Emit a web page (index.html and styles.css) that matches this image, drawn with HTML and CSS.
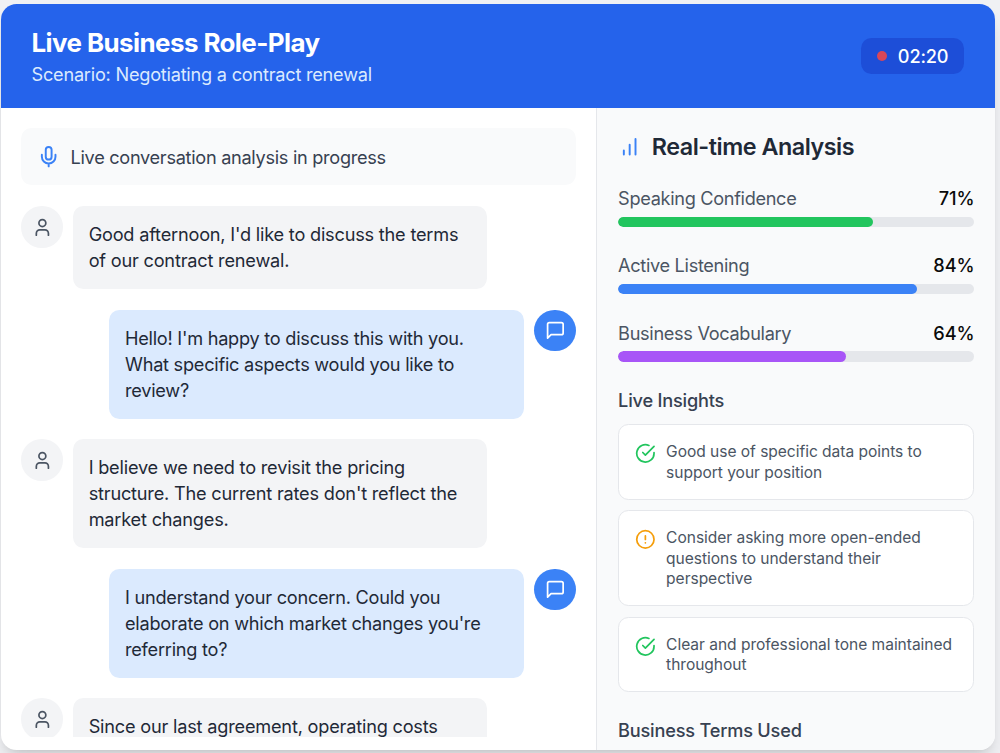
FILE: index.html
```html
<!DOCTYPE html>
<html lang="en">
<head>
<meta charset="utf-8">
<title>Live Business Role-Play</title>
<link rel="stylesheet" href="styles.css">
</head>
<body>
<svg class="defs" width="0" height="0">
  <symbol id="user" viewBox="0 0 24 24"><path d="M19 21v-2a4 4 0 0 0-4-4H9a4 4 0 0 0-4 4v2"/><circle cx="12" cy="7" r="4"/></symbol>
  <symbol id="message" viewBox="0 0 24 24"><path d="M21 15a2 2 0 0 1-2 2H7l-4 4V5a2 2 0 0 1 2-2h14a2 2 0 0 1 2 2z"/></symbol>
  <symbol id="check" viewBox="0 0 24 24"><path d="M22 11.08V12a10 10 0 1 1-5.93-9.14"/><path d="m9 11 3 3L22 4"/></symbol>
  <symbol id="alert" viewBox="0 0 24 24"><circle cx="12" cy="12" r="10"/><path d="M12 8v4M12 16h.01"/></symbol>
  <symbol id="mic" viewBox="0 0 24 24"><path d="M12 2a3 3 0 0 0-3 3v7a3 3 0 0 0 6 0V5a3 3 0 0 0-3-3Z"/><path d="M19 10v2a7 7 0 0 1-14 0v-2M12 19v3"/></symbol>
  <symbol id="bars" viewBox="0 0 24 24"><path d="M12 20V10M18 20V4M6 20v-4"/></symbol>
</svg>
<main class="card">
  <header class="header">
    <div>
      <h1 class="title">Live Business Role-Play</h1>
      <p class="scenario">Scenario: Negotiating a contract renewal</p>
    </div>
    <div class="timer"><span class="dot"></span><span class="time">02:20</span></div>
  </header>
  <div class="body">
    <section class="chat">
      <div class="banner"><svg class="icon icon-lg blue"><use href="#mic"/></svg><span class="banner-text">Live conversation analysis in progress</span></div>
      <div class="messages">
        <div class="message">
          <div class="avatar"><svg class="icon"><use href="#user"/></svg></div>
          <p class="bubble">Good afternoon, I'd like to discuss the terms<br>of our contract renewal.</p>
        </div>
        <div class="message reply">
          <p class="bubble">Hello! I'm happy to discuss this with you.<br>What specific aspects would you like to<br>review?</p>
          <div class="avatar"><svg class="icon"><use href="#message"/></svg></div>
        </div>
        <div class="message">
          <div class="avatar"><svg class="icon"><use href="#user"/></svg></div>
          <p class="bubble">I believe we need to revisit the pricing<br>structure. The current rates don't reflect the<br>market changes.</p>
        </div>
        <div class="message reply">
          <p class="bubble">I understand your concern. Could you<br>elaborate on which market changes you're<br>referring to?</p>
          <div class="avatar"><svg class="icon"><use href="#message"/></svg></div>
        </div>
        <div class="message">
          <div class="avatar"><svg class="icon"><use href="#user"/></svg></div>
          <p class="bubble">Since our last agreement, operating costs</p>
        </div>
      </div>
    </section>
    <aside class="analysis">
      <h2 class="heading"><svg class="icon icon-lg blue"><use href="#bars"/></svg><span class="heading-text">Real-time Analysis</span></h2>
      <div class="metrics">
        <div class="metric">
          <div class="row"><span>Speaking Confidence</span><b class="value">71%</b></div>
          <div class="track"><div class="fill green" style="width:71.5%"></div></div>
        </div>
        <div class="metric">
          <div class="row"><span>Active Listening</span><b class="value">84%</b></div>
          <div class="track"><div class="fill azure" style="width:84%"></div></div>
        </div>
        <div class="metric">
          <div class="row"><span>Business Vocabulary</span><b class="value">64%</b></div>
          <div class="track"><div class="fill purple" style="width:64%"></div></div>
        </div>
      </div>
      <h3 class="subheading">Live Insights</h3>
      <div class="insights">
        <div class="insight"><svg class="icon ok"><use href="#check"/></svg><p>Good use of specific data points to<br>support your position</p></div>
        <div class="insight"><svg class="icon warn"><use href="#alert"/></svg><p>Consider asking more open-ended<br>questions to understand their<br>perspective</p></div>
        <div class="insight"><svg class="icon ok"><use href="#check"/></svg><p>Clear and professional tone maintained<br>throughout</p></div>
      </div>
      <h3 class="subheading">Business Terms Used</h3>
    </aside>
  </div>
</main>
</body>
</html>
```
FILE: styles.css
```css
* { box-sizing: border-box; margin: 0; padding: 0; }
body {
  height: 753px;
  overflow: hidden;
  padding: 3.8px 0 0 0.9px;
  background: #f0f1f4;
  font-family: Inter, "Liberation Sans", sans-serif;
  font-size: 18.16px;
  line-height: 25.94px;
  letter-spacing: -0.2px;
}
.defs { display: block; position: absolute; }
.card {
  display: flex;
  flex-direction: column;
  width: 994.1px;
  height: 746.4px;
  overflow: hidden;
  border-radius: 15.6px;
  background: #fff;
  box-shadow: 0 13px 19px -4px rgba(0, 0, 0, 0.12), 0 5px 8px -5px rgba(0, 0, 0, 0.12);
}
.header {
  display: flex;
  justify-content: space-between;
  align-items: center;
  flex: none;
  height: 103.8px;
  padding: 0 31px 0 30.6px;
  background: #2563eb;
  color: #fff;
}
.title { padding-top: 1.8px; font-size: 25.94px; line-height: 36.3px; font-weight: 700; letter-spacing: -0.58px; }
.scenario { color: #dbeafe; letter-spacing: -0.23px; }
.timer {
  display: flex;
  align-items: center;
  gap: 10.4px;
  height: 36.3px;
  padding: 0 15.6px;
  border-radius: 10.4px;
  background: #1d4ed8;
}
.dot { width: 10.4px; height: 10.4px; border-radius: 50%; background: #d94758; }
.time { padding-top: 1.8px; font-weight: 500; letter-spacing: -0.15px; }
.body { display: flex; flex: 1; min-height: 0; }
.chat {
  display: flex;
  flex-direction: column;
  gap: 20.75px;
  width: 595.6px;
  padding: 20.75px 20.75px 13px 20.3px;
}
.banner {
  display: flex;
  align-items: center;
  flex: none;
  gap: 10.4px;
  height: 57.1px;
  padding: 0 15.6px;
  border-radius: 10.4px;
  background: #f9fafb;
  color: #374151;
}
.banner-text { padding-top: 2px; letter-spacing: -0.3px; }
.icon {
  flex: none;
  width: 20.75px;
  height: 20.75px;
  fill: none;
  stroke: currentColor;
  stroke-width: 2;
  stroke-linecap: round;
  stroke-linejoin: round;
}
.icon-lg { width: 23.35px; height: 23.35px; }
.blue { color: #3b82f6; }
.messages { display: flex; flex-direction: column; gap: 20.75px; min-height: 0; overflow: hidden; }
.message { display: flex; flex: none; gap: 10.4px; align-items: flex-start; }
.reply { justify-content: flex-end; }
.avatar {
  display: flex;
  align-items: center;
  justify-content: center;
  flex: none;
  width: 41.5px;
  height: 41.5px;
  border-radius: 50%;
  background: #f3f4f6;
  color: #4b5563;
}
.bubble {
  width: 414.4px;
  padding: 15.9px 15.56px 15.1px;
  border-radius: 10.4px;
  background: #f3f4f6;
  color: #1f2937;
  white-space: nowrap;
}
.reply .avatar { background: #3b82f6; color: #fff; }
.reply .bubble { background: #dbeafe; letter-spacing: -0.25px; }
.analysis {
  flex: 1;
  overflow: hidden;
  padding: 20.75px 20.6px 0;
  border-left: 1.3px solid #e5e7eb;
  background: #f9fafb;
}
.heading {
  display: flex;
  align-items: center;
  gap: 10.4px;
  height: 36.3px;
  margin-bottom: 20.75px;
  color: #1f2937;
  font-size: 23.35px;
  line-height: 36.3px;
  font-weight: 600;
  letter-spacing: -0.48px;
}
.heading-text { padding-top: 1.4px; }
.metrics, .metric { display: flex; flex-direction: column; }
.metrics { gap: 25.94px; }
.metric { gap: 5.2px; }
.row { display: flex; justify-content: space-between; height: 25.94px; padding-top: 0.6px; color: #4b5563; letter-spacing: -0.32px; }
.value { color: #0a0a0a; font-weight: 500; letter-spacing: -0.1px; }
.track { height: 10.4px; border-radius: 6px; background: #e5e7eb; overflow: hidden; }
.fill { height: 100%; border-radius: 6px; }
.green { background: #22c55e; }
.azure { background: #3b82f6; }
.purple { background: #a855f7; }
.subheading { margin: 25.94px 0 10.4px; color: #374151; font-size: 18.16px; font-weight: 500; }
.insights { display: flex; flex-direction: column; gap: 10.5px; }
.insight {
  display: flex;
  gap: 10.4px;
  padding: 15.9px 15.9px 16.1px;
  border: 1.3px solid #e5e7eb;
  border-radius: 10.4px;
  background: #fff;
  color: #4b5563;
  font-size: 15.56px;
  line-height: 20.75px;
  letter-spacing: -0.03px;
  white-space: nowrap;
}
.insight p { padding-top: 1px; margin-bottom: -1px; }
.insight .icon { margin-top: 2.2px; }
.ok { color: #22c55e; }
.warn { color: #f59e0b; }
```
